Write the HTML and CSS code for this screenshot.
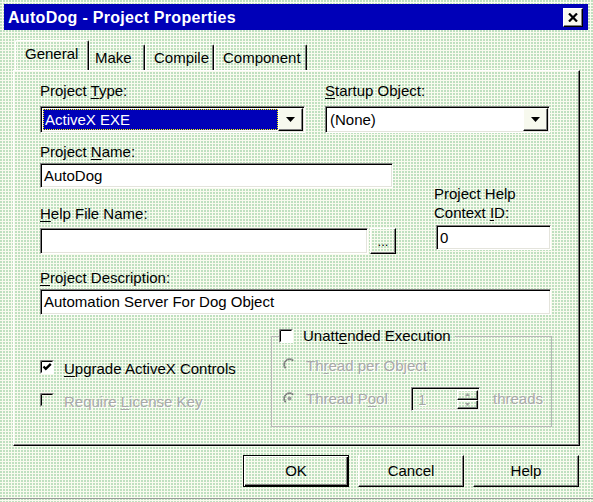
FILE: index.html
```html
<!DOCTYPE html>
<html>
<head>
<meta charset="utf-8">
<title>AutoDog - Project Properties</title>
<link rel="stylesheet" href="styles.css">
</head>
<body>
<div class="window">
  <div class="titlebar">
    <span class="title">AutoDog - Project Properties</span>
    <div class="close">
      <svg width="10" height="9" viewBox="0 0 10 9"><path d="M1 0.5L9 8.5M9 0.5L1 8.5" stroke="#000" stroke-width="2.2" fill="none"/></svg>
    </div>
  </div>
  <div class="client">
    <div class="tabs">
      <div class="tab sel t-gen">General</div>
      <div class="tab t-make">Make</div>
      <div class="tab t-comp">Compile</div>
      <div class="tab t-cmpn">Component</div>
    </div>
    <div class="panel">
      <div class="row1">
        <div>
          <div class="lbl">Project <u>T</u>ype:</div>
          <div class="combo sunken">
            <div class="combo-val selected"><span>ActiveX EXE</span></div>
            <div class="combo-btn raised"><svg width="9" height="5" viewBox="0 0 9 5"><polygon points="0,0 9,0 4.5,5" fill="#000"/></svg></div>
          </div>
        </div>
        <div>
          <div class="lbl"><u>S</u>tartup Object:</div>
          <div class="combo sunken">
            <div class="combo-val"><span>(None)</span></div>
            <div class="combo-btn raised"><svg width="9" height="5" viewBox="0 0 9 5"><polygon points="0,0 9,0 4.5,5" fill="#000"/></svg></div>
          </div>
        </div>
      </div>

      <div class="row2">
        <div class="left2">
          <div class="lbl">Project <u>N</u>ame:</div>
          <div class="field sunken f-name">AutoDog</div>
          <div class="lbl l-help"><u>H</u>elp File Name:</div>
          <div class="helprow">
            <div class="field sunken f-help"></div>
            <div class="browse raised">...</div>
          </div>
        </div>
        <div class="right2">
          <div class="lbl l-ctx">Project Help<br>Context <u>I</u>D:</div>
          <div class="field sunken f-ctx">0</div>
        </div>
      </div>

      <div class="lbl l-desc"><u>P</u>roject Description:</div>
      <div class="field sunken f-desc">Automation Server For Dog Object</div>

      <div class="row4">
        <div class="checks">
          <div class="chk-row c1">
            <svg class="cb" width="14" height="14" viewBox="0 0 14 14"><rect width="14" height="14" fill="#fff"/><path d="M0.5 13.5V0.5H13.5" stroke="#808080" fill="none"/><path d="M1.5 12.5V1.5H12.5" stroke="#000" fill="none"/><path d="M3.5 6.5L5.8 8.8L10.8 3.8" stroke="#000" stroke-width="2.4" fill="none"/></svg>
            <span><u>U</u>pgrade ActiveX Controls</span>
          </div>
          <div class="chk-row c2 disabled">
            <svg class="cb" width="14" height="14" viewBox="0 0 14 14"><path d="M0.5 13.5V0.5H13.5" stroke="#808080" fill="none"/><path d="M1.5 12.5V1.5H12.5" stroke="#000" fill="none"/></svg>
            <span>Require <u>L</u>icense Key</span>
          </div>
        </div>
        <fieldset class="group">
          <legend class="legend">
            <svg class="cb" width="14" height="14" viewBox="0 0 14 14"><rect width="14" height="14" fill="#fff"/><path d="M0.5 13.5V0.5H13.5" stroke="#808080" fill="none"/><path d="M1.5 12.5V1.5H12.5" stroke="#000" fill="none"/></svg>
            <span>Unatt<u>e</u>nded Execution</span>
          </legend>
          <div class="radio-row r1 disabled">
            <svg class="rb" width="13" height="13" viewBox="0 0 13 13"><path d="M2.26 10.74A6 6 0 0 1 10.74 2.26" stroke="#8c8c8c" fill="none"/><path d="M2.96 10.04A5 5 0 0 1 10.04 2.96" stroke="#6a6a6a" fill="none"/></svg>
            <span>Th<u>r</u>ead per Object</span>
          </div>
          <div class="radio-row r2 disabled">
            <svg class="rb" width="13" height="13" viewBox="0 0 13 13"><path d="M2.26 10.74A6 6 0 0 1 10.74 2.26" stroke="#8c8c8c" fill="none"/><path d="M2.96 10.04A5 5 0 0 1 10.04 2.96" stroke="#6a6a6a" fill="none"/><circle cx="6.5" cy="6.5" r="2" fill="#9a9a9a"/></svg>
            <span class="pool">Thread P<u>o</u>ol</span>
            <div class="spin sunken">
              <span class="spin-val">1</span>
              <div class="spin-btns">
                <div class="spin-b raised"><svg width="5" height="3" viewBox="0 0 5 3"><polygon points="0,3 5,3 2.5,0" fill="#a0a0a0"/></svg></div>
                <div class="spin-b raised"><svg width="5" height="3" viewBox="0 0 5 3"><polygon points="0,0 5,0 2.5,3" fill="#a0a0a0"/></svg></div>
              </div>
            </div>
            <span class="threads">threads</span>
          </div>
        </fieldset>
      </div>
    </div>
    <div class="buttons">
      <div class="btn default">OK</div>
      <div class="btn raised">Cancel</div>
      <div class="btn raised">Help</div>
    </div>
  </div>
</div>
</body>
</html>
```
FILE: styles.css
```css
html, body {
  margin: 0;
  padding: 0;
}
body {
  width: 593px;
  height: 502px;
  overflow: hidden;
  background-color: #f9fbef;
  background-image: radial-gradient(circle at 1px 1px, #bfe0c0 0.8px, transparent 1.2px);
  background-size: 3px 3px;
  font-family: "Liberation Sans", Arial, sans-serif;
  font-size: 15px;
  color: #000;
}
u { text-decoration: underline; text-underline-offset: 2px; }

.sunken {
  box-sizing: border-box;
  border-top: 1px solid #808080;
  border-left: 1px solid #808080;
  border-right: 1px solid #ffffff;
  border-bottom: 1px solid #ffffff;
  box-shadow: inset 1px 1px 0 #000, inset -1px -1px 0 #e4e4dc;
}
.raised {
  box-sizing: border-box;
  border-top: 1px solid #ffffff;
  border-left: 1px solid #ffffff;
  border-right: 1px solid #000;
  border-bottom: 1px solid #000;
  box-shadow: inset -1px -1px 0 #808080;
}

.window {
  box-sizing: border-box;
  height: 499px;
  padding: 4px 5px 0 4px;
  border-bottom: 1px solid #9a9a9a;
  display: flex;
  flex-direction: column;
}
.titlebar {
  height: 26px;
  flex: none;
  background: #0000b8;
  display: flex;
  align-items: center;
  justify-content: space-between;
  padding: 0 5px 0 4px;
}
.title {
  color: #fff;
  font-weight: bold;
  font-size: 16px;
  letter-spacing: 0.3px;
  margin-top: 2px;
}
.close {
  box-sizing: border-box;
  width: 20px;
  height: 19px;
  background: #f8f8ee;
  border-top: 1px solid #fff;
  border-left: 1px solid #fff;
  border-right: 1px solid #000;
  border-bottom: 1px solid #000;
  box-shadow: inset -1px -1px 0 #808080;
  display: flex;
  align-items: center;
  justify-content: center;
  margin-top: 1px;
}

.client {
  padding: 10px 8px 0 9px;
  display: flex;
  flex-direction: column;
}
.tabs {
  display: flex;
  align-items: flex-end;
  height: 30px;
  padding-left: 2px;
}
.tab {
  box-sizing: border-box;
  height: 26px;
  padding-top: 4px;
  border-top: 1px solid #fff;
  border-left: 1px solid #fff;
  border-right: 1px solid #000;
  box-shadow: inset -1px 0 0 #808080;
  border-radius: 2px 2px 0 0;
  line-height: 18px;
  white-space: nowrap;
}
.tab.sel {
  height: 31px;
  margin-bottom: -1px;
}
.t-gen { width: 74px; padding-left: 9px; }
.t-make { width: 56px; padding-left: 5px; }
.t-comp { width: 69px; padding-left: 8px; }
.t-cmpn { width: 93px; padding-left: 8px; }

.panel {
  box-sizing: border-box;
  height: 376px;
  flex: none;
  border-top: 1px solid #fff;
  border-left: 1px solid #fff;
  border-right: 1px solid #000;
  border-bottom: 1px solid #000;
  box-shadow: inset -1px -1px 0 #808080;
  padding: 11px 28px 0 26px;
}
.lbl {
  line-height: 18px;
  white-space: nowrap;
}
.row1 {
  display: grid;
  grid-template-columns: 265px 225px;
  column-gap: 20px;
}
.combo {
  margin-top: 6px;
  height: 27px;
  display: flex;
  background: #fff;
  padding: 1px;
}
.combo-val {
  flex: 1;
  display: flex;
  align-items: center;
  margin: 1px 0 1px 1px;
  padding-left: 2px;
  line-height: 18px;
}
.combo-val.selected {
  background: #0000b8;
  color: #fff;
  outline: 1px dotted #ffff00;
  outline-offset: -1px;
}
.combo-btn {
  width: 25px;
  flex: none;
  background: #f7f9ee;
  display: flex;
  align-items: center;
  justify-content: center;
}

.field {
  background: #fff;
  display: flex;
  align-items: center;
  padding-left: 3px;
  line-height: 18px;
  white-space: nowrap;
}
.row2 {
  display: flex;
  justify-content: space-between;
  margin-top: 10px;
}
.left2 { width: 356px; }
.right2 { width: 117px; }
.f-name { width: 353px; height: 25px; margin-top: 2px; }
.l-help { margin-top: 17px; }
.helprow {
  display: flex;
  gap: 2px;
  margin-top: 5px;
}
.f-help { width: 328px; height: 26px; }
.browse {
  width: 26px;
  height: 26px;
  font-size: 13px;
  line-height: 14px;
  display: flex;
  align-items: flex-end;
  justify-content: center;
  padding-bottom: 4px;
}
.l-ctx { margin-top: 41px; line-height: 19px; }
.f-ctx { width: 115px; height: 25px; margin: 3px 0 0 2px; }
.l-desc { margin-top: 15px; }
.f-desc { height: 26px; margin-top: 2px; }

.row4 {
  display: flex;
  margin-top: 12px;
}
.checks { width: 231px; flex: none; }
.chk-row {
  display: flex;
  align-items: flex-start;
  gap: 10px;
  line-height: 18px;
  white-space: nowrap;
}
.chk-row.c1 { margin-top: 33px; }
.chk-row.c2 { margin-top: 15px; }
.cb { flex: none; margin-top: 0; }
.disabled {
  color: #a8a8a8;
  text-shadow: 1px 1px 0 #ffffff;
}
.group {
  box-sizing: border-box;
  width: 281px;
  flex: none;
  margin: 0;
  min-width: 0;
  padding: 0 0 15px 7px;
  border: 1px solid #b8b8b8;
}
.legend {
  display: flex;
  align-items: center;
  gap: 10px;
  padding: 0 4px 0 0;
  line-height: 18px;
  white-space: nowrap;
}
.radio-row {
  display: flex;
  align-items: flex-start;
  margin-left: 4px;
  line-height: 18px;
  white-space: nowrap;
}
.radio-row.r1 { margin-top: 12px; }
.radio-row.r2 { margin-top: 12px; align-items: center; }
.rb { flex: none; margin: 1px 10px 0 0; }
.r2 .rb { margin-top: -2px; }
.pool { width: 105px; }
.spin {
  width: 69px;
  height: 24px;
  display: flex;
  padding: 2px 1px 1px 2px;
}
.spin-val {
  flex: 1;
  padding-left: 4px;
  line-height: 20px;
}
.spin-btns {
  width: 21px;
  display: flex;
  flex-direction: column;
}
.spin-b {
  flex: 1;
  display: flex;
  align-items: center;
  justify-content: center;
}
.threads { margin-left: 13px; }

.buttons {
  display: flex;
  justify-content: flex-end;
  gap: 9px;
  margin-top: 9px;
  padding-right: 1px;
}
.btn {
  box-sizing: border-box;
  width: 106px;
  height: 32px;
  display: flex;
  align-items: center;
  justify-content: center;
  line-height: 18px;
}
.btn.default {
  border: 1px solid #000;
  box-shadow: inset 1px 1px 0 #fff, inset -1px -1px 0 #000, inset -2px -2px 0 #808080;
}
```
